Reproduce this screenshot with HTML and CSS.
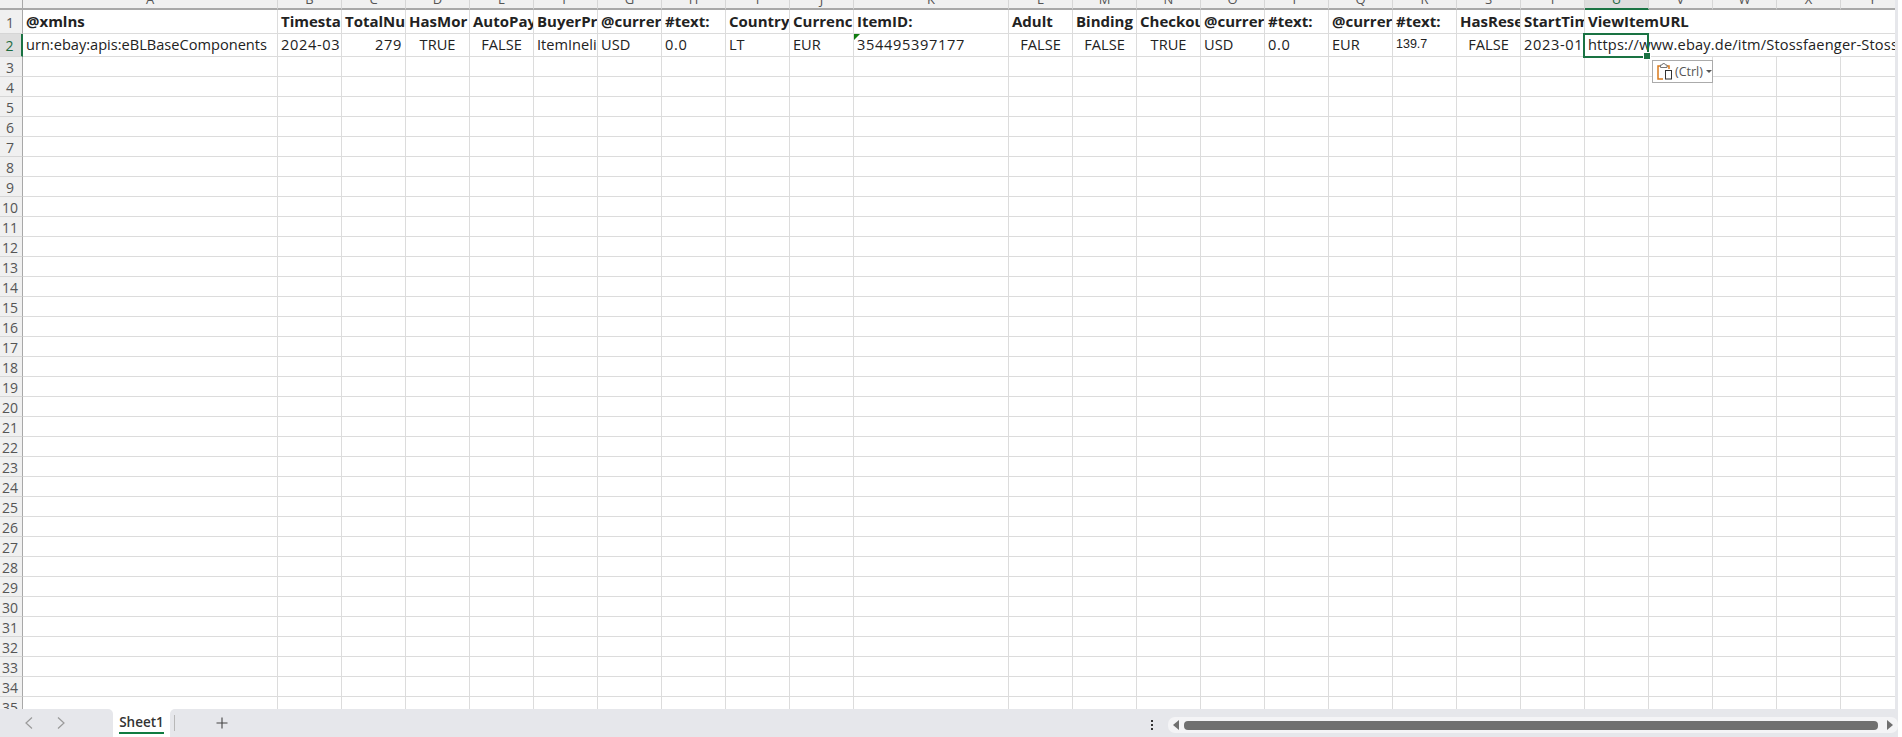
FILE: index.html
```html
<!DOCTYPE html>
<html lang="en">
<head>
    <meta charset="UTF-8">
    <meta name="viewport" content="width=device-width, initial-scale=1.0">
    <title>Sheet1</title>
    <link rel="stylesheet" href="styles.css">
</head>
<body>
    <div class="app">
        <div class="sheet" id="sheet">
            <div class="corner"></div>
            <div class="col">A</div><div class="col">B</div><div class="col">C</div><div class="col">D</div><div class="col">E</div><div class="col">F</div><div class="col">G</div><div class="col">H</div><div class="col">I</div><div class="col">J</div><div class="col">K</div><div class="col">L</div><div class="col">M</div><div class="col">N</div><div class="col">O</div><div class="col">P</div><div class="col">Q</div><div class="col">R</div><div class="col">S</div><div class="col">T</div><div class="col col-active">U</div><div class="col">V</div><div class="col">W</div><div class="col">X</div><div class="col">Y</div>

            <div class="row-num row-first">1</div>
            <div class="cell bold">@xmlns</div><div class="cell bold">Timesta</div><div class="cell bold">TotalNu</div><div class="cell bold">HasMor</div><div class="cell bold">AutoPay</div><div class="cell bold">BuyerPr</div><div class="cell bold">@currer</div><div class="cell bold">#text:</div><div class="cell bold">Country</div><div class="cell bold">Currenc</div><div class="cell bold">ItemID:</div><div class="cell bold">Adult</div><div class="cell bold">Binding</div><div class="cell bold">Checkou</div><div class="cell bold">@currer</div><div class="cell bold">#text:</div><div class="cell bold">@currer</div><div class="cell bold">#text:</div><div class="cell bold">HasRese</div><div class="cell bold">StartTim</div>
            <div class="cell bold span-5">ViewItemURL</div>

            <div class="row-num row-active">2</div>
            <div class="cell">urn:ebay:apis:eBLBaseComponents</div><div class="cell digits">2024-03</div><div class="cell digits num">279</div><div class="cell mid">TRUE</div><div class="cell mid">FALSE</div><div class="cell">ItemIneli</div><div class="cell">USD</div><div class="cell digits">0.0</div><div class="cell">LT</div><div class="cell">EUR</div>
            <div class="cell digits has-flag">354495397177</div>
            <div class="cell mid">FALSE</div><div class="cell mid">FALSE</div><div class="cell mid">TRUE</div><div class="cell">USD</div><div class="cell digits">0.0</div><div class="cell">EUR</div><div class="cell pasted">139.7</div><div class="cell mid">FALSE</div><div class="cell digits">2023-01</div>
            <div class="cell span-5 current"><span class="url">https://www.ebay.de/itm/Stossfaenger-Stoss</span>
                <div class="selection"></div>
                <div class="paste-btn">
                    <svg width="16" height="17" viewBox="0 0 16 17"><path d="M4 3H1V16H6" fill="none" stroke="#d97a1c" stroke-width="1.5"/><path d="M10 3H12V6" fill="none" stroke="#d97a1c" stroke-width="1.5"/><path d="M3.5 4.5V2H5L5.8.6H7.7L8.5 2H10V4.5Z" fill="#fff" stroke="#777"/><rect x="8.5" y="7.5" width="6" height="8.5" fill="#fff" stroke="#333"/></svg>
                    <span>(Ctrl)</span><i class="caret"></i>
                </div>
            </div>
        </div>

        <div class="tabbar">
            <div class="tab-nav">
                <svg width="10" height="14" viewBox="0 0 10 14"><path d="M8 1.5 2 7l6 5.5" fill="none" stroke="#9a9a9a" stroke-width="1.2"/></svg>
                <svg width="10" height="14" viewBox="0 0 10 14"><path d="M2 1.5 8 7l-6 5.5" fill="none" stroke="#9a9a9a" stroke-width="1.2"/></svg>
            </div>
            <div class="tab"><span>Sheet1</span></div>
            <div class="tab-rest">
                <div class="tab-sep"></div>
                <svg class="add" width="12" height="12" viewBox="0 0 12 12"><path d="M6 .5v11M.5 6h11" stroke="#444" stroke-width="1.1"/></svg>
                <div class="dots"><i></i><i></i><i></i></div>
                <div class="scroll">
                    <i class="arrow-left"></i>
                    <div class="thumb"></div>
                    <i class="arrow-right"></i>
                </div>
            </div>
        </div>
    </div>

    <script>
        // empty rows 3..35
        const sheet = document.getElementById('sheet');
        for (let r = 3; r <= 35; r++) {
            const num = document.createElement('div');
            num.className = 'row-num';
            num.textContent = r;
            sheet.appendChild(num);
            for (let c = 0; c < 25; c++) {
                const cell = document.createElement('div');
                cell.className = 'cell';
                sheet.appendChild(cell);
            }
        }
    </script>
</body>
</html>
```

FILE: styles.css
```css
* {
    box-sizing: border-box;
}
html, body {
    margin: 0;
    height: 100%;
    overflow: hidden;
}
body {
    font-family: "Open Sans", "Noto Sans", Arial, sans-serif;
    color: #222;
    background-color: #fff;
}
.app {
    width: 1898px;
    height: 737px;
    display: flex;
    flex-direction: column;
    background-color: #e6e7eb;
}
.sheet {
    height: 709px;
    width: 1895px;
    overflow: hidden;
    background-color: #fff;
    display: grid;
    grid-template-columns: 23px 255px repeat(9, 64px) 155px repeat(14, 64px);
    grid-template-rows: 10px 24px 23px repeat(33, 20px);
    align-content: start;
}
.corner {
    background-color: #f0f0f0;
    border-right: 1px solid #a8a8a8;
    border-bottom: 2px solid #a8a8a8;
}
.col {
    height: 10px;
    overflow: hidden;
    background-color: #f0f0f0;
    border-right: 1px solid #d6d6d6;
    border-bottom: 2px solid #a8a8a8;
    font-size: 13px;
    line-height: 14px;
    color: #555;
    text-align: center;
    display: flex;
    justify-content: center;
    align-items: flex-end;
    padding-bottom: 2px;
}
.col-active {
    background-color: #dedede;
    color: #1d6b41;
    border-bottom-color: #1a7343;
}
.row-num {
    background-color: #f0f0f0;
    border-right: 1px solid #a8a8a8;
    border-bottom: 1px solid #d6d6d6;
    font-size: 14px;
    line-height: 22px;
    color: #555;
    text-align: center;
    padding-right: 2px;
}
.row-first {
    line-height: 25px;
}
.row-active {
    background-color: #dedede;
    color: #1d6b41;
    border-right: 2px solid #1a7343;
    line-height: 23px;
}
.cell {
    border-right: 1px solid #dcdcdc;
    border-bottom: 1px solid #dcdcdc;
    padding: 0 3px;
    font-size: 14.6px;
    line-height: 21px;
    white-space: nowrap;
    overflow: hidden;
    position: relative;
}
.bold {
    font-size: 15px;
    font-weight: 700;
    line-height: 18px;
    padding-top: 2px;
}
.digits {
    letter-spacing: 0.65px;
}
.num {
    text-align: right;
    padding-right: 3px;
}
.mid {
    text-align: center;
}
.pasted {
    font-family: "Liberation Sans", Arial, sans-serif;
    font-size: 12.5px;
    line-height: 20px;
}
.has-flag::before {
    content: "";
    position: absolute;
    left: 0;
    top: 0;
    border-top: 6px solid #107c10;
    border-right: 6px solid transparent;
}
.span-5 {
    grid-column: span 5;
    border-right: none;
}
.current {
    overflow: visible;
    z-index: 2;
}
.url {
    letter-spacing: 0.17px;
}
.selection {
    position: absolute;
    left: -2px;
    top: -1px;
    width: 66px;
    height: 25px;
    border: 2px solid #1a7343;
}
.selection::after {
    content: "";
    position: absolute;
    right: -4px;
    bottom: -4px;
    width: 6px;
    height: 6px;
    background-color: #1a7343;
    border: 1px solid #fff;
}
.paste-btn {
    position: absolute;
    left: 67px;
    top: 26px;
    width: 61px;
    height: 23px;
    background-color: #fff;
    border: 1px solid #ababab;
    display: flex;
    align-items: center;
    gap: 2px;
    padding-left: 4px;
    font-size: 12.5px;
    line-height: 20px;
    color: #555;
}
.caret {
    width: 0;
    height: 0;
    border-left: 3px solid transparent;
    border-right: 3px solid transparent;
    border-top: 3px solid #555;
    margin-left: 1px;
}
.tabbar {
    flex: 1;
    background-color: #fff;
    display: flex;
}
.tab-nav {
    width: 113px;
    background-color: #e6e7eb;
    border-top-right-radius: 5px;
    display: flex;
    align-items: center;
    gap: 22px;
    padding-left: 24px;
}
.tab {
    width: 57px;
    background-color: #fff;
    font-size: 13.5px;
    font-weight: 600;
    color: #333;
    display: flex;
    justify-content: center;
}
.tab span {
    height: 25px;
    line-height: 26px;
    border-bottom: 2px solid #107c41;
}
.tab-rest {
    flex: 1;
    background-color: #e6e7eb;
    border-top-left-radius: 5px;
    display: flex;
    align-items: center;
    padding-left: 4px;
}
.tab-sep {
    width: 1px;
    height: 16px;
    background-color: #b8b8b8;
}
.add {
    margin-left: 41px;
}
.dots {
    margin: 4px 0 0 923px;
    width: 3px;
    display: flex;
    flex-direction: column;
    gap: 2px;
}
.dots i {
    width: 2px;
    height: 2px;
    background-color: #333;
}
.scroll {
    margin: 4px 0 0 14px;
    flex: 1;
    height: 16px;
    background-color: #f4f4f6;
    border-radius: 7px;
    display: flex;
    align-items: center;
    padding: 0 5px;
}
.thumb {
    flex: 1;
    height: 9px;
    margin: 0 9px 0 5px;
    background-color: #707070;
    border-radius: 4px;
}
.arrow-left, .arrow-right {
    width: 0;
    height: 0;
    border-top: 5px solid transparent;
    border-bottom: 5px solid transparent;
}
.arrow-left {
    border-right: 6px solid #707070;
}
.arrow-right {
    border-left: 6px solid #707070;
}
```
